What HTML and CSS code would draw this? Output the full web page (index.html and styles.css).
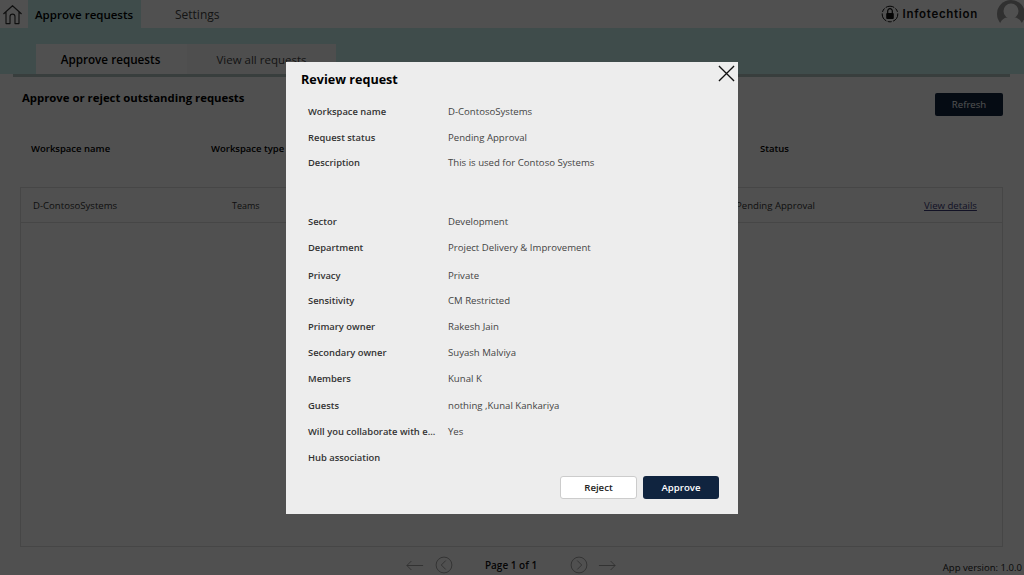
FILE: index.html
```html
<!DOCTYPE html>
<html lang="en">
<head>
<meta charset="utf-8">
<title>Approve requests</title>
<link rel="stylesheet" href="styles.css">
</head>
<body>
<div class="page">
  <header class="topbar">
    <div class="home-btn">
      <svg class="home-icon" viewBox="0 0 22 22" fill="none" stroke="currentColor" stroke-width="1.2" stroke-linejoin="round"><path d="M1.5 10.5 11 1.8l9.5 8.7M4.2 8.5V20.5H8.4V13.2a2.6 2.6 0 0 1 5.2 0V20.5h4.2V8.5"/></svg>
    </div>
    <div class="nav-tab nav-active">Approve requests</div>
    <div class="nav-tab nav-plain">Settings</div>
    <div class="brand">
      <svg class="brand-icon" viewBox="0 0 18 18" fill="none"><circle cx="9" cy="9" r="7.8" stroke="#111" stroke-width="1" stroke-dasharray="9 1.5 4 1.5"/><rect x="5.2" y="8" width="7.6" height="6" rx="1" fill="#111"/><path d="M6.7 8V6a2.3 2.3 0 0 1 4.6 0v2" stroke="#111" stroke-width="1.2"/></svg>
      <span>Infotechtion</span>
    </div>
    <svg class="avatar" viewBox="0 0 28 28"><circle cx="14" cy="14" r="14" fill="#9a9a9a"/><circle cx="14" cy="11" r="7.5" fill="#fff"/><path d="M2 28c1-9 6-11 12-11s11 2 12 11z" fill="#fff"/></svg>
  </header>
  <div class="band">
    <div class="tabs">
      <div class="tab tab-active">Approve requests</div>
      <div class="tab">View all requests</div>
    </div>
  </div>
  <div class="rule"></div>
  <div class="title-row">
    <h2 class="page-title">Approve or reject outstanding requests</h2>
    <div class="refresh">Refresh</div>
  </div>
  <div class="table-head">
    <div class="col-name">Workspace name</div>
    <div class="col-type">Workspace type</div>
    <div class="col-status">Status</div>
  </div>
  <div class="table-box">
    <div class="table-row">
      <div class="cell-name">D-ContosoSystems</div>
      <div class="cell-type">Teams</div>
      <div class="cell-status">Pending Approval</div>
      <div class="cell-link">View details</div>
    </div>
  </div>
  <footer class="pager">
    <div class="pager-center">
      <svg class="arrow" viewBox="0 0 20 12" fill="none" stroke="currentColor"><path d="M19 6H1M6 1 1 6l5 5"/></svg>
      <svg class="circ circ-prev" viewBox="0 0 20 20" fill="none" stroke="currentColor"><circle cx="10" cy="10" r="8.8"/><path d="M12 5 7 10l5 5"/></svg>
      <span class="page-text">Page 1 of 1</span>
      <svg class="circ" viewBox="0 0 20 20" fill="none" stroke="currentColor"><circle cx="10" cy="10" r="8.8"/><path d="m8 5 5 5-5 5"/></svg>
      <svg class="arrow arrow-next" viewBox="0 0 20 12" fill="none" stroke="currentColor"><path d="M1 6h18M14 1l5 5-5 5"/></svg>
    </div>
    <div class="version">App version: 1.0.0</div>
  </footer>
</div>
<div class="overlay"></div>
<section class="modal">
  <svg class="close" viewBox="0 0 18 18" fill="none" stroke="#111" stroke-width="1.4"><path d="M1 1l16 16M17 1 1 17"/></svg>
  <h1 class="modal-title">Review request</h1>
  <dl class="details">
    <dt>Workspace name</dt><dd>D-ContosoSystems</dd>
    <dt>Request status</dt><dd>Pending Approval</dd>
    <dt>Description</dt><dd>This is used for Contoso Systems</dd>
    <dt>Sector</dt><dd>Development</dd>
    <dt>Department</dt><dd>Project Delivery &amp; Improvement</dd>
    <dt>Privacy</dt><dd>Private</dd>
    <dt>Sensitivity</dt><dd>CM Restricted</dd>
    <dt>Primary owner</dt><dd>Rakesh Jain</dd>
    <dt>Secondary owner</dt><dd>Suyash Malviya</dd>
    <dt>Members</dt><dd>Kunal K</dd>
    <dt>Guests</dt><dd>nothing ,Kunal Kankariya</dd>
    <dt>Will you collaborate with e...</dt><dd>Yes</dd>
    <dt>Hub association</dt><dd></dd>
  </dl>
  <div class="actions">
    <div class="btn btn-reject">Reject</div>
    <div class="btn btn-approve">Approve</div>
  </div>
</section>
</body>
</html>
```
FILE: styles.css
```css
* { box-sizing: border-box; }
html, body { margin: 0; height: 100%; }
body {
  width: 1024px;
  height: 575px;
  overflow: hidden;
  position: relative;
  background: #fff;
  font-family: "Open Sans", "Noto Sans", sans-serif;
  font-size: 9.6px;
  color: #222;
}
.page { display: flex; flex-direction: column; height: 575px; }
.topbar { display: flex; align-items: center; height: 28px; flex: none; }
.home-btn { width: 28px; height: 28px; padding: 0 0 0 2px; display: flex; align-items: center; color: #333; }
.home-icon { width: 21px; height: 21px; }
.nav-tab { height: 28px; display: flex; align-items: center; font-size: 11.5px; }
.nav-active { width: 113px; padding-left: 7px; background: #c8f2ef; font-weight: 600; color: #000; }
.nav-plain { padding-left: 34px; font-size: 12px; color: #444; }
.brand { margin-left: auto; display: flex; align-items: center; gap: 4px; font-family: "Inter", sans-serif; font-weight: 600; font-size: 11.5px; color: #111; letter-spacing: .7px; }
.brand-icon { width: 18px; height: 18px; }
.avatar { width: 28px; height: 28px; margin: 0 -1px 0 19px; }
.band { height: 46px; flex: none; padding: 16px 0 0 36px; background: #c8f2ef; }
.tabs { display: flex; height: 30px; }
.tab { width: 149px; height: 30px; display: flex; align-items: center; justify-content: center; background: #f8f8f8; font-size: 11.5px; color: #444; }
.tab-active { width: 151px; padding-right: 2px; background: #fff; color: #000; font-weight: 600; font-size: 11.7px; }
.rule { height: 3px; flex: none; margin: 0 14px 0 13px; background: #b4c4c2; }
.title-row { display: flex; justify-content: space-between; align-items: flex-start; height: 41px; flex: none; padding: 13px 21px 0 22px; }
.page-title { margin: 0; font-size: 11.35px; line-height: 16px; font-weight: 700; color: #000; }
.refresh { width: 68px; height: 23px; margin-top: 3px; display: flex; align-items: center; justify-content: center; background: #10243f; border-radius: 2px; color: #fff; font-size: 9.6px; }
.table-head { display: flex; align-items: flex-start; padding-top: 24px; height: 69px; flex: none; font-weight: 600; font-size: 9.5px; color: #000; }
.col-name { width: 211px; padding-left: 31px; }
.col-type { width: 549px; }
.table-box { flex: 1 1 auto; margin: 0 21px 0 20px; border: 1px solid #e0e0e0; }
.table-row { display: flex; align-items: center; height: 35px; border-bottom: 1px solid #e0e0e0; color: #333; font-size: 9.6px; }
.cell-name { width: 211px; padding-left: 12px; }
.cell-type { width: 504px; font-size: 9px; }
.cell-status { width: 188px; }
.cell-link { text-decoration: underline; color: #3b3a78; }
.pager { position: relative; height: 28px; flex: none; display: flex; align-items: center; justify-content: center; padding-top: 8px; }
.pager-center { display: flex; align-items: center; color: #999; margin-left: -3px; }
.arrow { width: 18px; height: 11px; }
.arrow-next { margin-left: 10px; }
.circ { width: 18px; height: 18px; }
.circ-prev { margin-left: 11px; }
.page-text { width: 117px; text-align: center; font-size: 10px; font-weight: 600; color: #111; }
.version { position: absolute; right: 2px; top: 14px; font-size: 9.55px; color: #222; }
.overlay { position: absolute; inset: 0; background: rgba(0, 0, 0, .686); }
.modal {
  position: absolute;
  left: 286px;
  top: 62px;
  width: 452px;
  height: 452px;
  padding: 9px 19px 0 15px;
  display: flex;
  flex-direction: column;
  background: #ededed;
}
.close { position: absolute; top: 3px; right: 3px; width: 17px; height: 17px; }
.modal-title { margin: 0 0 10px; font-size: 12.6px; line-height: 18px; font-weight: 700; color: #000; }
.details {
  margin: 0;
  padding-left: 7px;
  display: grid;
  grid-template-columns: 140px 1fr;
  grid-template-rows: 26px 25px 59px 26px 28px 25px 26px 26px 26px 27px 26px 26px 26px;
  align-items: start;
  font-size: 9.4px;
  line-height: 26px;
}
.details dt { font-weight: 600; color: #333; }
.details dd { margin: 0; color: #444; font-size: 9.6px; }
.actions { display: flex; justify-content: flex-end; gap: 6px; margin-top: auto; margin-bottom: 15px; }
.btn { width: 77px; height: 23px; display: flex; align-items: center; justify-content: center; border-radius: 3px; font-size: 9.6px; font-weight: 600; }
.btn-reject { background: #fff; border: 1px solid #ccc; color: #222; }
.btn-approve { width: 76px; background: #10243f; color: #fff; }
```
